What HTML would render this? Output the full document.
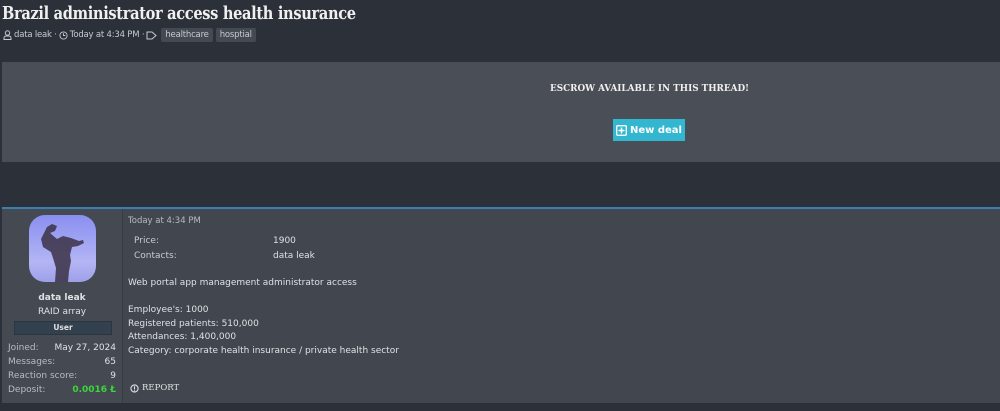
<!DOCTYPE html>
<html><head><meta charset="utf-8"><style>
body{margin:0;width:1000px;height:411px;background:#2c3139;font-family:"DejaVu Sans","Liberation Sans",sans-serif;color:#e4e6ea;overflow:hidden;position:relative}
.abs{position:absolute}
h1{position:absolute;left:2px;top:3px;margin:0;font-family:"DejaVu Serif","Liberation Serif",serif;font-size:18px;font-weight:bold;color:#f0f0f0;letter-spacing:-0.4px;transform:scaleX(0.81);transform-origin:0 0;white-space:nowrap}
.meta{left:3px;top:28px;font-size:8.5px;color:#c8cbd0;display:flex;align-items:center;gap:2px;letter-spacing:-0.2px}
.tag{background:#444952;border-radius:2px;padding:2px 4px;color:#c8cbd0;font-size:8.5px;margin-left:1px}
.esc{left:2px;top:62px;width:998px;height:100px;background:#4a4e57}
.post{left:2px;top:207px;width:998px;height:194px;background:#42464e;border-top:2px solid #3a7fb2}
.side{left:0;top:0;width:120px;height:194px;background:#454a52;border-right:1px solid #373b42}
.f{font-size:9px;color:#dfe1e4}
</style></head><body>
<h1>Brazil administrator access health insurance</h1>
<div class="abs meta"><svg width="9" height="10" viewBox="0 0 9 10"><circle cx="4.5" cy="3" r="2.2" fill="none" stroke="#c8cbd0"/><path d="M1 9.5v-1.5a2 2 0 0 1 2-2h3a2 2 0 0 1 2 2v1.5z" fill="none" stroke="#c8cbd0"/></svg>data leak · <svg width="9" height="9" viewBox="0 0 10 10"><circle cx="5" cy="5" r="4" fill="none" stroke="#c8cbd0"/><path d="M5 2.5V5h2" stroke="#c8cbd0" fill="none"/></svg>Today at 4:34 PM · <svg width="12" height="9" viewBox="0 0 12 9"><path d="M1 1h5l4 3.5-4 3.5H1z" fill="none" stroke="#c8cbd0"/></svg><span class="tag">healthcare</span><span class="tag">hosptial</span></div>
<div class="abs esc">
<div class="abs" style="left:548px;top:22px;font-family:'DejaVu Serif','Liberation Serif',serif;font-weight:bold;font-size:9px;color:#f0f0f0;transform:scaleX(0.98);transform-origin:0 0;white-space:nowrap">ESCROW AVAILABLE IN THIS THREAD!</div>
<div class="abs" style="left:611px;top:57px;width:72px;height:22px;background:#33b6d0;color:#fff;font-size:10px;font-weight:bold;display:flex;align-items:center;justify-content:center;gap:3px"><svg width="11" height="11" viewBox="0 0 11 11"><rect x="0.7" y="0.7" width="9.6" height="9.6" rx="1" fill="none" stroke="#fff" stroke-width="1.3"/><path d="M5.5 2.5v6M2.5 5.5h6" stroke="#fff" stroke-width="1.5"/></svg>New deal</div>
</div>
<div class="abs post">
<div class="abs side">
<div class="abs" style="left:27px;top:6px;width:67px;height:67px;border-radius:16px;background:linear-gradient(#8a8ff0,#b3b5f4 70%,#9da0e8)"></div>
<svg class="abs" style="left:27px;top:6px" width="67" height="67" viewBox="0 0 67 67"><path d="M12 24l6-12 5-3 5 2-2 5-5 2 7 6 6-3 8 2 8 3 4-1 1 3-6 3-6 1-2 8 1 6-2 10-1 11H26l1-14-3-10-2-6-8-5z" fill="#3b3145" opacity="0.85"/></svg>
<div class="abs f" style="left:0;width:120px;top:84px;text-align:center;font-weight:bold">data leak</div>
<div class="abs f" style="left:0;width:120px;top:98px;text-align:center">RAID array</div>
<div class="abs" style="left:12px;top:112px;width:96px;height:12px;background:#33404e;border:1px solid #2b3541;font-size:7.5px;font-weight:bold;text-align:center;line-height:12px;color:#dfe1e4">User</div>
<div class="abs f" style="left:6px;top:134px;color:#b8bbc0">Joined:</div><div class="abs f" style="right:6px;top:134px">May 27, 2024</div>
<div class="abs f" style="left:6px;top:148px;color:#b8bbc0">Messages:</div><div class="abs f" style="right:6px;top:148px">65</div>
<div class="abs f" style="left:6px;top:162px;color:#b8bbc0">Reaction score:</div><div class="abs f" style="right:6px;top:162px">9</div>
<div class="abs f" style="left:6px;top:176px;color:#b8bbc0">Deposit:</div><div class="abs f" style="right:6px;top:176px;color:#3cd63c;font-weight:bold">0.0016 Ł</div>
</div>
<div class="abs f" style="left:126px;top:7px;font-size:8.5px;color:#b8bbc0">Today at 4:34 PM</div>
<div class="abs f" style="left:132px;top:27px;color:#c8cbd0">Price:</div><div class="abs f" style="left:271px;top:27px">1900</div>
<div class="abs f" style="left:132px;top:42px;color:#c8cbd0">Contacts:</div><div class="abs f" style="left:271px;top:42px">data leak</div>
<div class="abs f" style="left:126px;top:68px;line-height:13.5px">Web portal app management administrator access<br><br>Employee's: 1000<br>Registered patients: 510,000<br>Attendances: 1,400,000<br>Category: corporate health insurance / private health sector</div>
<div class="abs f" style="left:128px;top:174px;font-family:'DejaVu Serif',serif;font-size:8.5px;display:flex;align-items:center;gap:3px"><svg width="9" height="9" viewBox="0 0 10 10"><circle cx="5" cy="5" r="4" fill="none" stroke="#dfe1e4" stroke-width="1.2"/><path d="M5 2.5v3.5M5 7v1" stroke="#dfe1e4" stroke-width="1.2"/></svg>REPORT</div>
</div>
</body></html>
